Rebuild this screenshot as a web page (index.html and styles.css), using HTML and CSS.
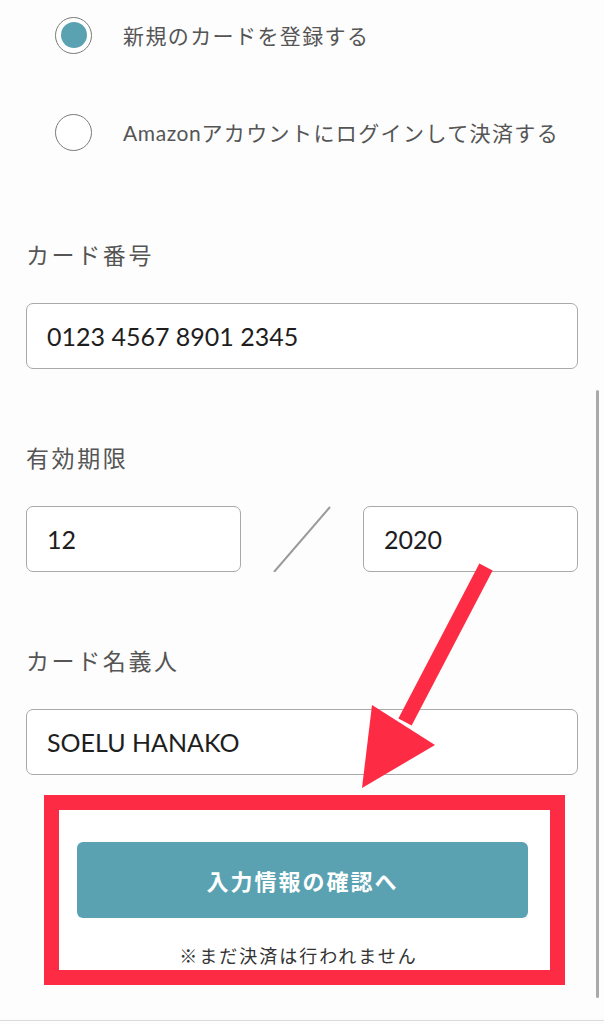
FILE: index.html
```html
<!DOCTYPE html>
<html lang="ja">
<head>
<meta charset="utf-8">
<title>カード情報入力</title>
<link rel="stylesheet" href="styles.css">
</head>
<body>
<div class="page">
  <div class="radios">
    <div class="radio-row">
      <span class="radio checked"><span class="dot"></span></span>
      <span class="radio-label">新規のカードを登録する</span>
    </div>
    <div class="radio-row">
      <span class="radio"></span>
      <span class="radio-label"><span class="latin">Amazon</span>アカウントにログインして決済する</span>
    </div>
  </div>

  <div class="field first">
    <div class="label">カード番号</div>
    <div class="input">0123 4567 8901 2345</div>
  </div>

  <div class="field">
    <div class="label">有効期限</div>
    <div class="date-row">
      <div class="input half">12</div>
      <svg class="slash" width="58" height="66" viewBox="0 0 58 66"><line x1="1" y1="66" x2="57" y2="1" stroke="#9a9a9a" stroke-width="2"/></svg>
      <div class="input half">2020</div>
    </div>
  </div>

  <div class="field">
    <div class="label">カード名義人</div>
    <div class="input">SOELU HANAKO</div>
  </div>

  <div class="highlight">
    <div class="button">入力情報の確認へ</div>
    <div class="note">※まだ決済は行われません</div>
  </div>

  <div class="footer-line"></div>

  <div class="scrollbar"></div>
  <svg class="arrow" width="604" height="1024" viewBox="0 0 604 1024">
    <line x1="486" y1="567" x2="405" y2="722" stroke="#fe2b44" stroke-width="15"/>
    <polygon points="372,705 435,745 362,788" fill="#fe2b44"/>
  </svg>
</div>
</body>
</html>
```

FILE: styles.css
```css
html, body {
  margin: 0;
  padding: 0;
  background: #fdfdfd;
}
body {
  font-family: Lato, "Noto Sans CJK JP", sans-serif;
  color: #555;
}
.page {
  position: relative;
  width: 604px;
  height: 1024px;
  padding: 0 26px;
  box-sizing: border-box;
  overflow: hidden;
}
.radios {
  padding-top: 7px;
  padding-left: 29px;
  display: flex;
  flex-direction: column;
  gap: 41px;
}
.radio-row {
  height: 56px;
  display: flex;
  align-items: center;
}
.radio {
  width: 37px;
  height: 37px;
  box-sizing: border-box;
  border: 1.5px solid #7a7a7a;
  border-radius: 50%;
  display: flex;
  align-items: center;
  justify-content: center;
  background: #fff;
  flex: none;
}
.dot {
  width: 26px;
  height: 26px;
  border-radius: 50%;
  background: #5aa2b1;
}
.radio-label {
  margin-left: 31px;
  font-size: 21px;
  letter-spacing: 1.4px;
  color: #555;
}
.latin {
  letter-spacing: 0.6px;
}
.field {
  margin-top: 69px;
}
.field.first {
  margin-top: 75px;
}
.label {
  height: 40px;
  line-height: 40px;
  font-size: 23px;
  letter-spacing: 2.6px;
  color: #555;
  margin-bottom: 28px;
}
.input {
  height: 66px;
  box-sizing: border-box;
  border: 1.5px solid #a9a9a9;
  border-radius: 7px;
  background: #fff;
  padding-left: 20px;
  display: flex;
  align-items: center;
  font-size: 25px;
  color: #1e1e1e;
}
.date-row {
  display: flex;
  align-items: center;
  justify-content: space-between;
}
.input.half {
  width: 215px;
}
.slash {
  display: block;
}
.highlight {
  margin-top: 20px;
  margin-left: 18px;
  width: 521px;
  height: 190px;
  box-sizing: border-box;
  border: 15px solid #fe2b44;
  background: #fff;
  padding-top: 32px;
}
.button {
  margin-left: 18px;
  width: 451px;
  height: 76px;
  border-radius: 6px;
  background: #5aa2b1;
  color: #fff;
  font-weight: bold;
  font-size: 22px;
  letter-spacing: 2px;
  display: flex;
  align-items: center;
  justify-content: center;
}
.note {
  margin-top: 24px;
  height: 28px;
  line-height: 28px;
  text-align: center;
  font-size: 18px;
  letter-spacing: 2px;
  color: #333;
  padding-right: 12px;
}
.footer-line {
  margin: 35px -26px 0;
  height: 1px;
  background: #dcdcdc;
}
.scrollbar {
  position: absolute;
  left: 596px;
  top: 390px;
  width: 3px;
  height: 608px;
  border-radius: 2px;
  background: #aaa;
}
.arrow {
  position: absolute;
  left: 0;
  top: 0;
  pointer-events: none;
}
```
